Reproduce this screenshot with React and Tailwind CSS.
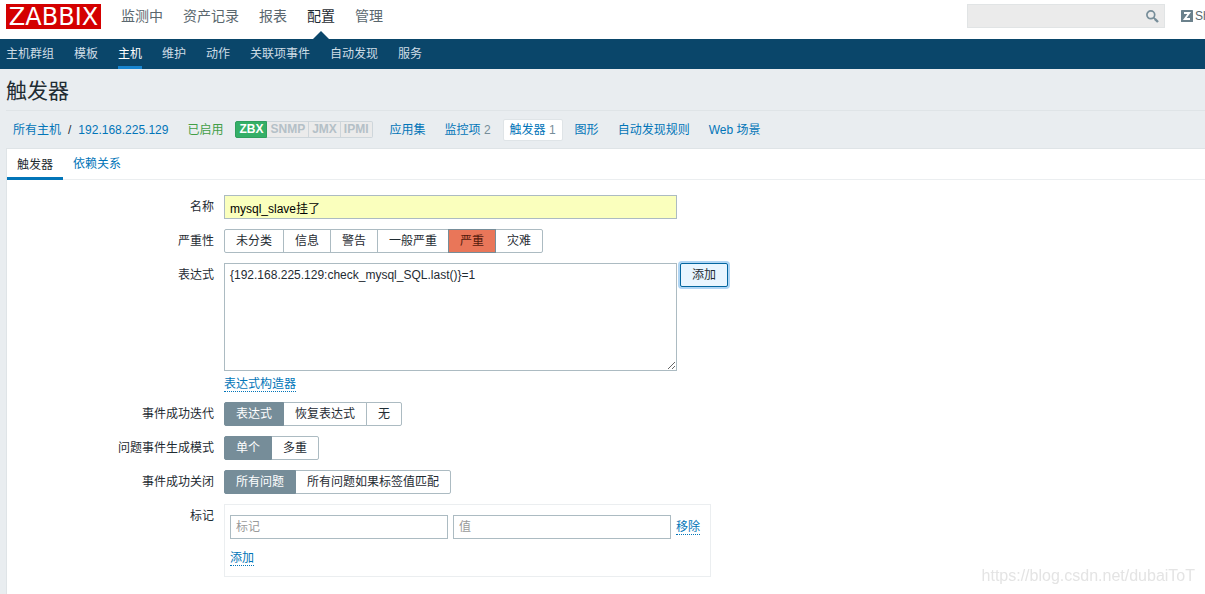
import React, { useState } from 'react';

const mainMenu = ['监测中', '资产记录', '报表', '配置', '管理'];
const subMenu = ['主机群组', '模板', '主机', '维护', '动作', '关联项事件', '自动发现', '服务'];
const interfaces = ['SNMP', 'JMX', 'IPMI'];

const hostLinks = [
    { label: '应用集' },
    { label: '监控项', count: 2 },
    { label: '触发器', count: 1, active: true },
    { label: '图形' },
    { label: '自动发现规则' },
    { label: 'Web 场景' },
];

const inputClass = 'h-6 rounded-none border border-[#acbbc2] bg-white px-[5px] text-xs text-[#1f2c33] outline-none placeholder:text-[#9a9a9a]';
const dottedLink = 'border-b border-dotted border-[#0275b8] text-[#0275b8] leading-[14px]';

const FormRow = ({ label, htmlFor, children }) => (
    <div className="flex items-start gap-2.5">
        {htmlFor ? (
            <label htmlFor={htmlFor} className="w-[207px] shrink-0 text-right leading-6">{label}</label>
        ) : (
            <span className="w-[207px] shrink-0 text-right leading-6">{label}</span>
        )}
        {children}
    </div>
);

const RadioGroup = ({ name, label, options, initial, checkedClass = 'z-10 border-[#768d99] bg-[#768d99] text-white' }) => {
    const [value, setValue] = useState(initial);

    return (
        <div role="radiogroup" aria-label={label} className="flex">
            {options.map((option) => (
                <label
                    key={option}
                    className={`relative -ml-px h-6 cursor-pointer border px-[11px] leading-[22px] first:ml-0 first:rounded-l-xs last:rounded-r-xs ${
                        value === option ? checkedClass : 'border-[#acbbc2] bg-white'
                    }`}
                >
                    <input
                        type="radio"
                        name={name}
                        value={option}
                        checked={value === option}
                        onChange={() => setValue(option)}
                        className="sr-only"
                    />
                    {option}
                </label>
            ))}
        </div>
    );
};

const Header = () => (
    <header>
        <div className="flex h-[39px] items-start bg-white pl-1.5">
            <a
                href="#"
                className="mt-1 flex h-[25px] w-[95px] shrink-0 items-center justify-center bg-[#d40000] font-['DejaVu_Sans',sans-serif] text-2xl leading-none text-white"
            >
                ZABBIX
            </a>
            <nav className="ml-5 flex h-full gap-5 text-sm leading-8">
                {mainMenu.map((item) => (
                    <a
                        key={item}
                        href="#"
                        className={`relative whitespace-nowrap ${item === '配置' ? 'text-[#1f2c33]' : 'text-[#5a676e]'}`}
                    >
                        {item}
                        {item === '配置' && (
                            <span className="absolute bottom-0 left-1/2 -translate-x-1/2 border-x-8 border-b-8 border-x-transparent border-b-[#0a466a]" />
                        )}
                    </a>
                ))}
            </nav>
            <form className="relative mt-1 ml-auto" onSubmit={(e) => e.preventDefault()}>
                <input
                    type="text"
                    aria-label="Search"
                    className="h-6 w-[198px] border border-[#e1e4e5] bg-[#ebebeb] px-1.5 pr-7 text-xs outline-none"
                />
                <button type="submit" aria-label="Search" className="absolute top-1.5 right-1.5">
                    <svg width="13" height="13" viewBox="0 0 13 13" fill="none" stroke="#768d99">
                        <circle cx="4.8" cy="4.8" r="3.9" strokeWidth="1.7" />
                        <path d="M7.6 7.6l1.4 1.4" strokeWidth="1.6" />
                        <path d="M8.8 8.8l3.2 3.2" strokeWidth="2.4" />
                    </svg>
                </button>
            </form>
            <a href="#" className="ml-4 flex h-8 w-6 shrink-0 items-center gap-0.5 overflow-hidden text-xs text-[#5a676e]">
                <svg width="12" height="12" viewBox="0 0 12 12" className="shrink-0">
                    <rect width="12" height="12" rx="0.6" fill="#6b818c" />
                    <path d="M3 3h5.2L3.8 9H9" fill="none" stroke="#fff" strokeWidth="1.9" />
                </svg>
                Share
            </a>
        </div>
        <nav className="flex h-[30px] gap-5 bg-[#0a466a] px-1.5 leading-[30px]">
            {subMenu.map((item) => (
                <a
                    key={item}
                    href="#"
                    className={`whitespace-nowrap ${item === '主机' ? 'h-full border-b-3 border-[#1785d0] text-white' : 'text-[#cfdde6]'}`}
                >
                    {item}
                </a>
            ))}
        </nav>
    </header>
);

const HostBar = () => (
    <div className="ml-1.5 flex h-[38px] items-center gap-[5px] border-t border-[#dfe4e7] whitespace-nowrap">
        <div className="flex gap-[7px] px-[7px]">
            <a href="#" className="text-[#0275b8]">所有主机</a>
            <span>/</span>
            <a href="#" className="mr-[7px] text-[#0275b8]">192.168.225.129</a>
        </div>
        <span className="pr-[7px] text-[#429e47]">已启用</span>
        <div className="mr-[5px] flex font-bold leading-[15px]">
            <span className="rounded-l-xs border border-[#2f9f5e] bg-[#34af67] px-[3px] text-white">ZBX</span>
            {interfaces.map((name) => (
                <span
                    key={name}
                    className="border border-l-0 border-[#ced6db] bg-[#ebebeb] px-[3px] text-[#b4c0c7] last:rounded-r-xs"
                >
                    {name}
                </span>
            ))}
        </div>
        {hostLinks.map(({ label, count, active }) => (
            <a
                key={label}
                href="#"
                className={`rounded-xs border px-1.5 leading-5 text-[#0275b8] ${active ? 'border-[#dfe4e7] bg-white' : 'border-transparent'}`}
            >
                {label}
                {count && <span className="text-[#768d99]"> {count}</span>}
            </a>
        ))}
    </div>
);

const TriggerForm = () => (
    <form className="flex flex-col gap-2.5 pt-[15px] pb-4" onSubmit={(e) => e.preventDefault()}>
        <FormRow label="名称" htmlFor="name">
            <input
                id="name"
                type="text"
                defaultValue="mysql_slave挂了"
                className="h-6 w-[453px] border border-[#acbbc2] bg-[#faffbd] px-[5px] text-xs text-black outline-none"
            />
        </FormRow>
        <FormRow label="严重性">
            <RadioGroup
                name="severity"
                label="严重性"
                options={['未分类', '信息', '警告', '一般严重', '严重', '灾难']}
                initial="严重"
                checkedClass="z-10 border-[#768d99] bg-[#e97659] text-[#52190b]"
            />
        </FormRow>
        <FormRow label="表达式" htmlFor="expression">
            <div>
                <div className="flex items-start gap-[3px]">
                    <textarea
                        id="expression"
                        defaultValue="{192.168.225.129:check_mysql_SQL.last()}=1"
                        className="block h-[108px] w-[453px] resize border border-[#acbbc2] bg-white px-[5px] py-1 text-xs leading-[14px] outline-none"
                    />
                    <button
                        type="button"
                        className="h-6 rounded-xs border border-[#02659f] bg-[#e8f5ff] px-[11px] leading-[22px] ring-2 ring-[#afd5f4]"
                    >
                        添加
                    </button>
                </div>
                <div className="flex h-[21px] items-end">
                    <a href="#" className={dottedLink}>表达式构造器</a>
                </div>
            </div>
        </FormRow>
        <FormRow label="事件成功迭代">
            <RadioGroup name="recovery" label="事件成功迭代" options={['表达式', '恢复表达式', '无']} initial="表达式" />
        </FormRow>
        <FormRow label="问题事件生成模式">
            <RadioGroup name="mode" label="问题事件生成模式" options={['单个', '多重']} initial="单个" />
        </FormRow>
        <FormRow label="事件成功关闭">
            <RadioGroup name="close" label="事件成功关闭" options={['所有问题', '所有问题如果标签值匹配']} initial="所有问题" />
        </FormRow>
        <FormRow label="标记">
            <div className="border border-[#ebeef0] pt-2.5 pr-2.5 pb-2.5 pl-[5px]">
                <div className="flex items-center gap-[5px]">
                    <input type="text" aria-label="标记" placeholder="标记" className={`w-[218px] ${inputClass}`} />
                    <input type="text" aria-label="值" placeholder="值" className={`w-[218px] ${inputClass}`} />
                    <button type="button" className={dottedLink}>移除</button>
                </div>
                <div className="mt-3 flex">
                    <button type="button" className={dottedLink}>添加</button>
                </div>
            </div>
        </FormRow>
    </form>
);

const App = () => (
    <div className="flex min-h-screen flex-col overflow-x-hidden bg-[#e9edf0] font-['Liberation_Sans','Noto_Sans_CJK_SC',sans-serif] text-xs text-[#1f2c33]">
        <Header />
        <h1 className="px-1.5 pt-1 pb-px text-[21px] leading-9">触发器</h1>
        <HostBar />
        <main className="ml-1.5 flex-1 border-t border-l border-[#dfe4e7] bg-white">
            <div role="tablist" className="flex h-[31px] border-b border-[#ebeef0] leading-[30px]">
                <button
                    type="button"
                    role="tab"
                    aria-selected="true"
                    className="-mb-px border-b-3 border-[#0275b8] px-2.5 pt-0.5 leading-7"
                >
                    触发器
                </button>
                <button type="button" role="tab" aria-selected="false" className="px-2.5 text-[#0275b8]">依赖关系</button>
            </div>
            <TriggerForm />
        </main>
        <div className="pointer-events-none fixed right-2.5 bottom-2 text-base leading-5 text-[#e4e4e4]">
            https://blog.csdn.net/dubaiToT
        </div>
    </div>
);

export default App;
